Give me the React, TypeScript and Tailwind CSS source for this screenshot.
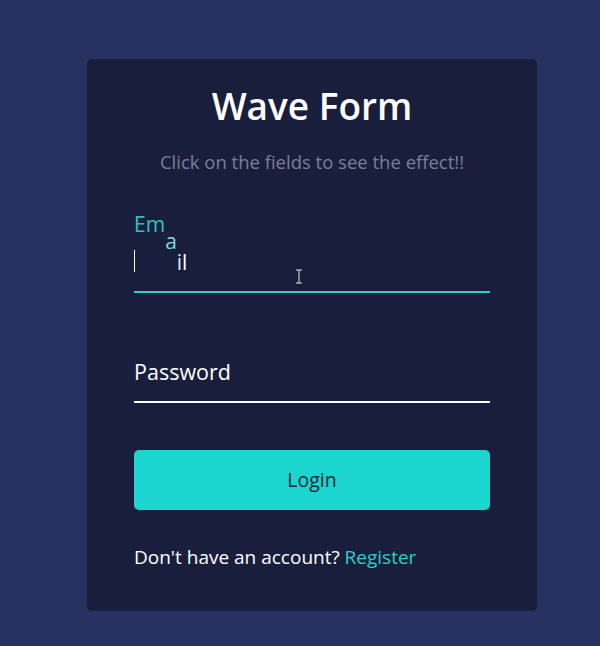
import React from "react";

const emailLetters = [
  { ch: "E", shift: "-translate-y-[38px]", color: "text-[#2cc3bd]" },
  { ch: "m", shift: "-translate-y-[38px]", color: "text-[#2cc3bd]" },
  { ch: "a", shift: "-translate-y-[21px]", color: "text-[#7fd9d6]" },
  { ch: "i", shift: "translate-y-0", color: "text-[#d9eef0]" },
  { ch: "l", shift: "translate-y-0", color: "text-white" },
];

const passwordLetters = ["P", "a", "s", "s", "w", "o", "r", "d"];

export default function App() {
  return (
    <div
      className="min-h-screen bg-[#283262] pt-[59px] pl-[87px]"
      style={{ fontFamily: "'Open Sans', 'Noto Sans', sans-serif" }}
    >
      <div className="w-[450px] h-[552px] bg-[#1a1e3d] rounded-[5px] px-[47px] pt-[25px] flex flex-col">
        <h1 className="text-center text-[37px] leading-[44px] font-semibold text-white">Wave Form</h1>
        <p className="mt-[22px] text-center text-[18.5px] leading-[24px] text-[#7b7f94]">
          Click on the fields to see the effect!!
        </p>

        {/* Email field, mid-animation */}
        <div className="relative mt-[67px] h-[52px] border-b-2 border-[#2ad0c8]">
          <span className="absolute left-0 top-[9px] w-px h-[22px] bg-white" />
          <label className="absolute left-0 top-[7px] text-[21px] leading-[28px] flex">
            {emailLetters.map((l, i) => (
              <span key={i} className={`inline-block ${l.shift} ${l.color}`}>
                {l.ch}
              </span>
            ))}
          </label>
          {/* mouse I-beam */}
          <svg className="absolute left-[161px] top-[28px]" width="8" height="15" viewBox="0 0 8 15">
            <path d="M1 1h6M4 1v13M1 14h6" stroke="#e5e7eb" strokeWidth="1" fill="none" />
          </svg>
        </div>

        {/* Password field, resting */}
        <div className="relative mt-[58px] h-[52px] border-b-2 border-white">
          <label className="absolute left-0 top-[7px] text-[21.5px] leading-[28px] text-white flex">
            {passwordLetters.map((ch, i) => (
              <span key={i} className="inline-block">
                {ch}
              </span>
            ))}
          </label>
        </div>

        <button className="mt-[47px] h-[60px] w-full rounded-[5px] bg-[#1bd6cf] text-[19.5px] text-[#1b2638]">
          Login
        </button>

        <p className="mt-[35px] text-[19px] leading-[24px] text-white">
          Don't have an account? <a className="text-[#2ad0c8]">Register</a>
        </p>
      </div>
    </div>
  );
}
